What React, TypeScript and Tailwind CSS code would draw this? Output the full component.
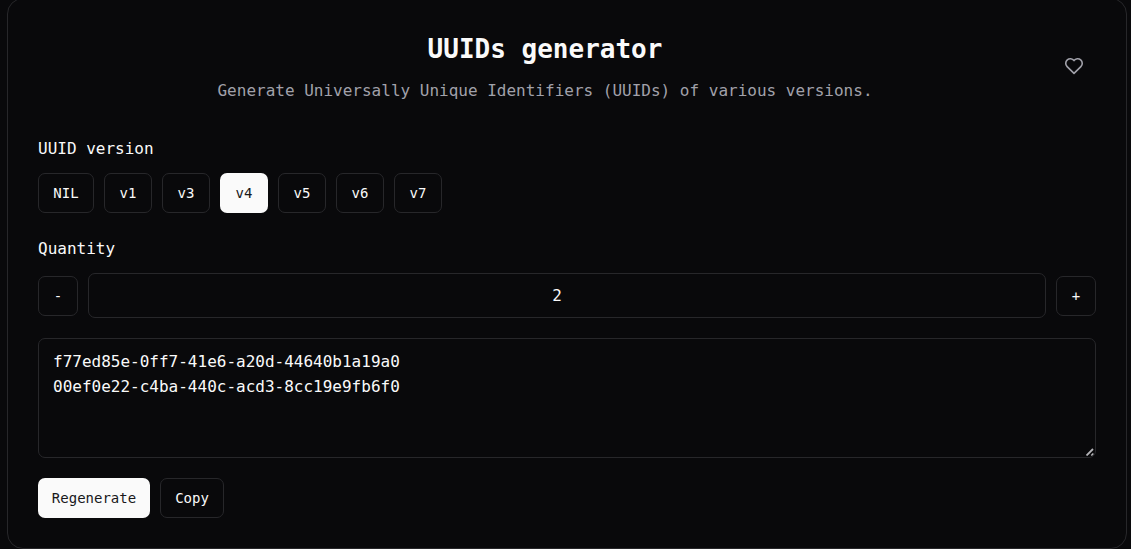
import { useState } from "react";

const VERSIONS = ["NIL", "v1", "v3", "v4", "v5", "v6", "v7"];

const outline =
  "inline-flex h-10 shrink-0 items-center justify-center rounded-[7px] border border-[#27272a] text-sm text-[#fafafa] hover:bg-[#27272a]";
const solid =
  "inline-flex h-10 shrink-0 items-center justify-center rounded-[7px] bg-[#fafafa] text-sm text-[#18181b] hover:bg-[#e4e4e7]";

function randomUuid(): string {
  return crypto.randomUUID ? crypto.randomUUID() : "00000000-0000-0000-0000-000000000000";
}

export default function App() {
  const [version, setVersion] = useState("v4");
  const [quantity, setQuantity] = useState(2);
  const [value, setValue] = useState(
    "f77ed85e-0ff7-41e6-a20d-44640b1a19a0\n00ef0e22-c4ba-440c-acd3-8cc19e9fb6f0",
  );

  const generate = (count: number) => {
    setQuantity(count);
    setValue(Array.from({ length: count }, randomUuid).join("\n"));
  };

  return (
    <div className="min-h-screen bg-[#09090b] pr-1 pl-[7px] font-['DejaVu_Sans_Mono',monospace] text-base text-[#fafafa] scheme-dark">
      <main className="-mt-0.5 rounded-2xl border border-[#27272a] px-[30px] pt-8 pb-[30px]">
        <header className="flex items-center">
          <div className="flex-1 text-center">
            <h1 className="text-[26px] leading-9 font-bold">UUIDs generator</h1>
            <p className="mt-3 leading-6 text-[#a1a1aa]">
              Generate Universally Unique Identifiers (UUIDs) of various versions.
            </p>
          </div>
          <button
            type="button"
            aria-label="Add to favorites"
            className="flex size-11 items-center justify-center rounded-[7px] text-[#a1a1aa]"
          >
            <svg viewBox="0 0 24 24" className="size-[22px]" fill="none" stroke="currentColor" strokeWidth="1.75" strokeLinecap="round" strokeLinejoin="round">
              <path d="M19.5 11.572l-7.5 7.428l-7.5-7.428a5 5 0 1 1 7.5-6.566a5 5 0 1 1 7.5 6.572" />
            </svg>
          </button>
        </header>

        <fieldset className="mt-[34px]">
          <legend className="leading-6">UUID version</legend>
          <div className="mt-3 flex flex-wrap gap-2.5">
            {VERSIONS.map((name) => (
              <button
                key={name}
                type="button"
                aria-pressed={name === version}
                onClick={() => setVersion(name)}
                className={`${name === version ? solid : outline} ${name === "NIL" ? "w-14" : "w-12"}`}
              >
                {name}
              </button>
            ))}
          </div>
        </fieldset>

        <div className="mt-6">
          <label htmlFor="quantity" className="block leading-6">
            Quantity
          </label>
          <div className="mt-3 flex items-center gap-2.5">
            <button type="button" aria-label="Decrease" onClick={() => generate(Math.max(1, quantity - 1))} className={`${outline} w-10`}>
              -
            </button>
            <input
              id="quantity"
              inputMode="numeric"
              value={quantity}
              onChange={(e) => setQuantity(Number(e.target.value) || 1)}
              className="h-[45px] min-w-0 flex-1 rounded-[7px] border border-[#27272a] bg-transparent pr-8 pl-3 text-center outline-none"
            />
            <button type="button" aria-label="Increase" onClick={() => generate(quantity + 1)} className={`${outline} w-10`}>
              +
            </button>
          </div>
        </div>

        <div className="relative mt-5">
          <textarea
            aria-label="Generated UUIDs"
            value={value}
            onChange={(e) => setValue(e.target.value)}
            className="block h-[120px] w-full resize-y rounded-[7px] border border-[#27272a] bg-transparent px-3.5 py-2.5 leading-[25px] outline-none [&::-webkit-resizer]:bg-transparent"
          />
          <svg viewBox="0 0 8 8" className="pointer-events-none absolute right-0.5 bottom-0.5 size-2" fill="none" stroke="#b4b4b8" aria-hidden="true">
            <path d="M0.5 7.5L7 1" strokeWidth="1.8" />
            <path d="M5.3 7.5L7.3 5.5" strokeWidth="1.6" />
          </svg>
        </div>

        <div className="mt-5 flex gap-2.5">
          <button type="button" onClick={() => generate(quantity)} className={`${solid} w-28`}>
            Regenerate
          </button>
          <button type="button" onClick={() => navigator.clipboard?.writeText(value)} className={`${outline} w-16`}>
            Copy
          </button>
        </div>
      </main>
    </div>
  );
}
